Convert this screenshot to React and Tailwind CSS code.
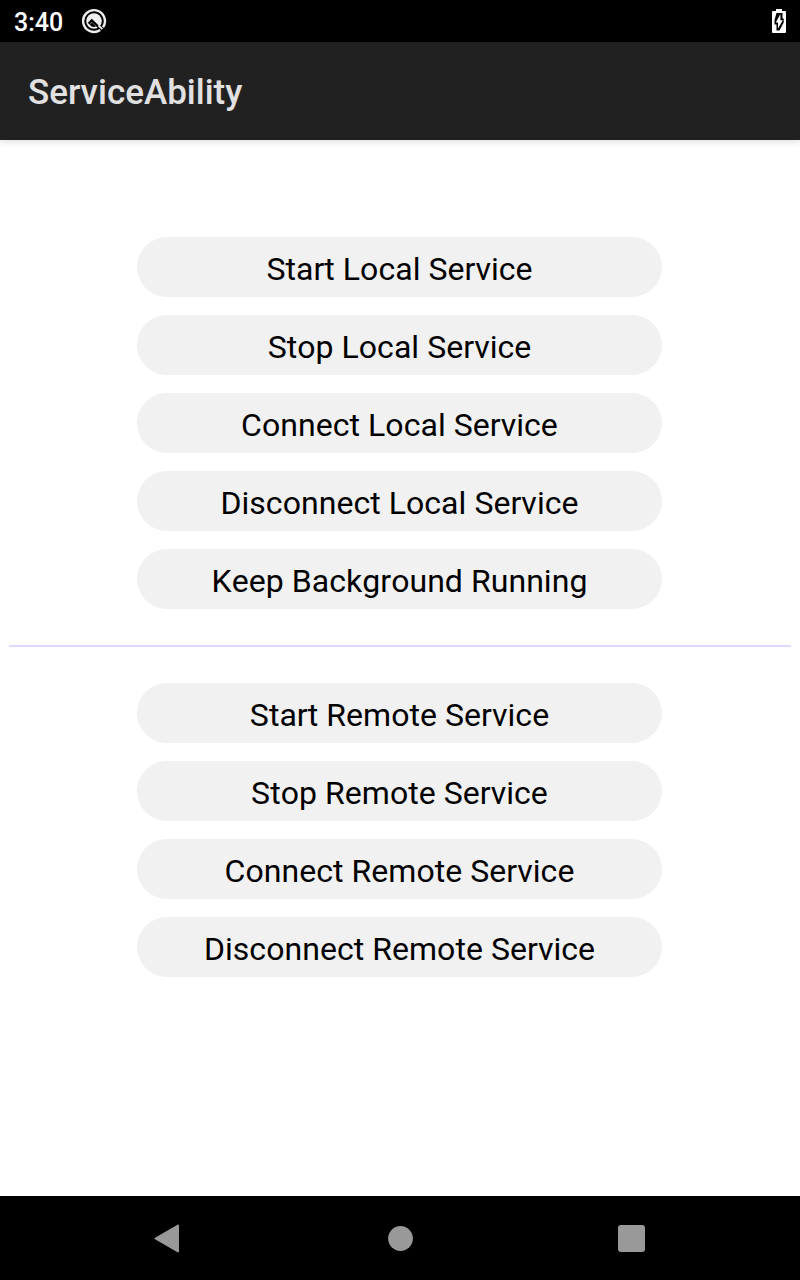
const local = ['Start Local Service','Stop Local Service','Connect Local Service','Disconnect Local Service','Keep Background Running'];
const remote = ['Start Remote Service','Stop Remote Service','Connect Remote Service','Disconnect Remote Service'];

function ServiceButton({ label }) {
  return (
    <button className="flex h-[60px] w-[525px] items-center justify-center rounded-full bg-[#f1f1f1] pt-1 text-[32px] leading-none tracking-[0.05px] text-black [font-kerning:none]">
      {label}
    </button>
  );
}

export default function App() {
  return (
    <div className="flex h-[1280px] w-[800px] flex-col overflow-hidden bg-white font-['Roboto',sans-serif]">
      <div className="flex h-[42px] shrink-0 items-center bg-black pl-3.5 pr-[14px] text-white">
        <span className="pt-[3px] text-[25px] leading-none font-medium">3:40</span>
        <svg className="ml-[18px]" width="26" height="26" viewBox="0 0 26 26" fill="none" stroke="#eee">
          <circle cx="13" cy="13" r="7.8" fill="#eee" stroke="none" />
          <path d="M7.6 15.6L10.8 12.4L20 21.4" stroke="#000" strokeWidth="2.2" />
          <path d="M8.6 16.4L11 14.4L15 18.6Q11 19.8 8.6 16.4z" fill="#000" stroke="none" />
          <path d="M19.2 22A10.9 10.9 0 1 1 22 19.2" strokeWidth="2.4" />
          <path d="M17.5 17.5L21.4 21.2" strokeWidth="1.8" />
        </svg>
        <svg className="ml-auto" width="14" height="24" viewBox="0 0 14 24">
          <path fill="#fff" d="M4 0h6v2h3q1 0 1 1v20q0 1-1 1H1q-1 0-1-1V3q0-1 1-1h3z" />
          <path fill="#000" d="M4.5 4h6v5.5h1.2v4L7.5 21.5h-3v-6h-2v-4.5z" />
          <path fill="#fff" d="M8.4 5v6.2h2.4L6 19.6v-6.2H3.8z" />
        </svg>
      </div>
      <header className="z-10 flex h-[98px] shrink-0 items-center bg-[#212121] pl-7 pt-0.5 shadow-[0_2px_7px_rgba(0,0,0,0.13)]">
        <h1 className="text-[35px] leading-none font-medium text-[#e1e1e1]">ServiceAbility</h1>
      </header>
      <main className="flex flex-1 flex-col items-center pt-[97px]">
        <div className="flex flex-col gap-[18px] pr-px">
          {local.map((l) => <ServiceButton key={l} label={l} />)}
        </div>
        <hr className="my-9 h-0.5 w-[782px] border-0 bg-[#dfdbff]" />
        <div className="flex flex-col gap-[18px] pr-px">
          {remote.map((l) => <ServiceButton key={l} label={l} />)}
        </div>
      </main>
      <nav className="flex h-[84px] shrink-0 items-center bg-black pl-[153px]">
        <svg width="27" height="30" viewBox="0 0 27 30" fill="#999" stroke="#999" strokeWidth="2" strokeLinejoin="round"><path d="M2.5 15.5L25 2.5v26z" /></svg>
        <svg className="ml-[207px]" width="27" height="27" fill="#999"><circle cx="13.5" cy="13.5" r="12.4" /></svg>
        <div className="ml-[204px] size-[27px] rounded-[3px] bg-[#999]" />
      </nav>
    </div>
  );
}
